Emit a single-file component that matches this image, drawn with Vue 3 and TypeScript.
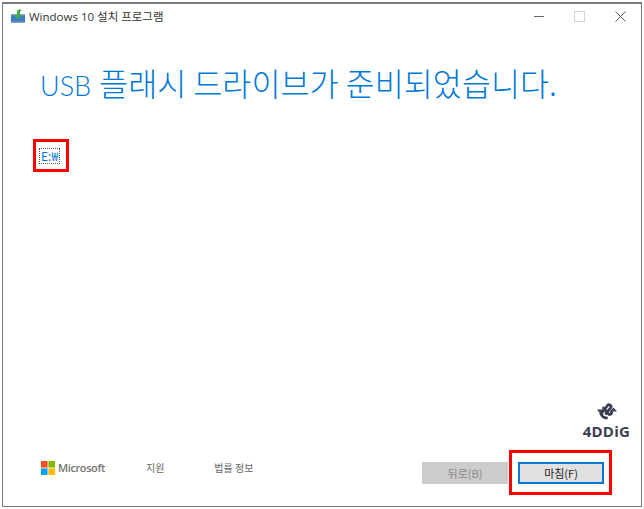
<script setup lang="ts">
const links = ["지원", "법률 정보"];
</script>

<template>
  <div class="window">
    <header class="titlebar">
      <div class="title">
        <svg class="app-icon" width="14" height="14" viewBox="0 0 14 14">
          <path d="M0 5h14v9H0z" fill="#3f7fc0" />
          <path d="M0 5h14v1.500H0zM0 12.500h14V14H0z" fill="#7f9fc0" />
          <path d="M6 1.500l3.500-1.500 1 1.500L9 2.500V6h2l-4 4-4-4h3z" fill="#3fae49" />
        </svg>
        <span>Windows 10 설치 프로그램</span>
      </div>
      <div class="controls">
        <span class="ctl"><i class="min"></i></span>
        <span class="ctl"><i class="max"></i></span>
        <span class="ctl">
          <svg width="11" height="11" viewBox="0 0 11 11">
            <path d="M.5.5l10 10M10.500.5l-10 10" stroke="#555" fill="none" />
          </svg>
        </span>
      </div>
    </header>

    <main class="content">
      <h1><span class="usb">USB</span> 플래시 드라이브가 준비되었습니다.</h1>
      <div class="drive-row">
        <span class="drive">E:₩</span>
      </div>
    </main>

    <div class="brand">
      <svg width="22" height="18" viewBox="0 0 22 18">
        <g fill="none" stroke="#3c3f52" stroke-width="2.800" stroke-linecap="round" stroke-linejoin="round">
          <path d="M5 12L11.500 3.500c1.500-1.800 4.500.2 3.200 2.300L10 11.500" />
          <path d="M7.500 6L12 11.500c1.400 2 4.200.6 3.500-1.500" />
          <path d="M5 11.500c1 3 3 4.500 5.500 4.500" />
        </g>
        <path d="M1 7.500h6.500L4.500 12zM21 9.500h-7l3.500-4z" fill="#3c3f52" />
      </svg>
      <span>4DDiG</span>
    </div>

    <footer class="footer">
      <div class="ms">
        <svg width="14" height="14" viewBox="0 0 14 14">
          <path d="M0 0h6.600v6.600H0z" fill="#f25022" />
          <path d="M7.400 0H14v6.600H7.400z" fill="#7fba00" />
          <path d="M0 7.400h6.600V14H0z" fill="#00a4ef" />
          <path d="M7.400 7.400H14V14H7.400z" fill="#ffb900" />
        </svg>
        <span>Microsoft</span>
      </div>
      <nav class="links">
        <span v-for="link in links" :key="link">{{ link }}</span>
      </nav>
      <div class="buttons">
        <button class="btn" disabled>뒤로(B)</button>
        <span class="annotated-btn">
          <button class="btn primary">마침(F)</button>
        </span>
      </div>
    </footer>
  </div>
</template>

<style scoped>
.window {
  box-sizing: border-box;
  width: 640px;
  height: 505px;
  margin: 2px 0 0 2px;
  border: 1px solid #7a7a7a;
  border-top-width: 2px;
  background: #fff;
  display: flex;
  flex-direction: column;
  position: relative;
  font-family: "Noto Sans CJK KR", "Noto Sans", sans-serif;
}
.titlebar {
  height: 24px;
  display: flex;
  justify-content: space-between;
  align-items: center;
  flex-shrink: 0;
}
.title {
  display: flex;
  align-items: center;
  gap: 4px;
  padding-left: 8px;
  font-size: 11.5px;
  color: #333;
  font-family: "Open Sans", "Noto Sans CJK KR", sans-serif;
}
.controls {
  display: flex;
  align-items: center;
}
.ctl {
  width: 41px;
  height: 22px;
  display: flex;
  align-items: center;
  justify-content: center;
}
.min {
  width: 10px;
  height: 1px;
  background: #666;
}
.max {
  width: 9px;
  height: 9px;
  border: 1px solid #d4d4d4;
}
.content {
  flex: 1;
  padding: 34px 0 0 37px;
}
h1 {
  margin: 0;
  font-size: 31.6px;
  line-height: 40px;
  font-weight: 300;
  color: #0078d7;
  font-family: "Noto Sans CJK KR", sans-serif;
  white-space: nowrap;
}
.usb {
  font-family: Lato, sans-serif;
  font-size: 27px;
  line-height: 0;
  margin-right: 1px;
}
.drive-row {
  display: flex;
  width: fit-content;
  margin: 37px 0 0 -7px;
  padding: 6px 6px 5px 3px;
  border: 3px solid #f00;
}
.drive {
  border: 1px dotted #555;
  font-size: 12px;
  line-height: 14px;
  padding: 0 1px;
  color: #0078d7;
}
.brand {
  position: absolute;
  right: 11px;
  bottom: 66px;
  display: flex;
  flex-direction: column;
  align-items: center;
  gap: 3px;
  font: 700 15px/17px "Open Sans", sans-serif;
  letter-spacing: 0.2px;
  color: #3c3f52;
}
.brand svg {
  margin-left: 1px;
}
.footer {
  height: 60px;
  display: flex;
  align-items: flex-start;
  padding: 0 29px 0 38px;
  flex-shrink: 0;
}
.ms {
  display: flex;
  align-items: center;
  gap: 3px;
  margin-top: 15px;
  font: 600 11px/14px "Open Sans", sans-serif;
  letter-spacing: -0.4px;
  color: #737373;
}
.links {
  display: flex;
  gap: 50px;
  margin: 15px 0 0 41px;
  font-size: 10px;
  line-height: 14px;
  color: #666;
}
.buttons {
  margin-left: auto;
  margin-top: 4px;
  display: flex;
  align-items: center;
}
.btn {
  box-sizing: border-box;
  width: 86px;
  height: 22px;
  border: 1px solid #ccc;
  background: #ccc;
  color: #8a8a8a;
  font-size: 11px;
  font-family: inherit;
  padding: 0;
}
.primary {
  background: #e1e1e1;
  border: 2px solid #0078d7;
  color: #222;
}
.annotated-btn {
  display: inline-flex;
  padding: 9px 5px 8px 6px;
  margin-left: 1px;
  border: 3px solid #f00;
}
</style>
